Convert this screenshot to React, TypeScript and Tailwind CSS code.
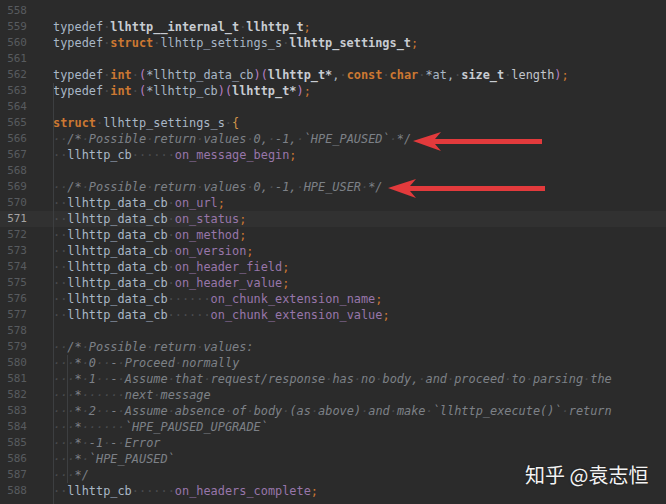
type Tok = [string, string];

const C: Record<string, string> = {
  t: "text-[#a9b7c6]",
  b: "text-[#c8ccd2] font-bold",
  k: "text-[#cc7832] font-bold",
  p: "text-[#b77fc4]",
  f: "text-[#9876aa]",
  s: "text-[#cc7832]",
  c: "text-[#7d8187] italic",
  l: "text-[#c3c6cb]",
  o: "text-[#d1954a]",
};

const lines: Tok[][] = [
  [],
  [["typedef ", "t"], ["llhttp__internal_t llhttp_t", "b"], [";", "s"]],
  [["typedef ", "t"], ["struct", "k"], [" llhttp_settings_s ", "t"], ["llhttp_settings_t", "b"], [";", "s"]],
  [],
  [
    ["typedef ", "t"],
    ["int", "k"],
    [" ", "t"],
    ["(", "p"],
    ["*llhttp_data_cb", "t"],
    [")(", "p"],
    ["llhttp_t*", "b"],
    [", ", "t"],
    ["const char", "k"],
    [" *at, ", "t"],
    ["size_t", "b"],
    [" ", "t"],
    ["length", "l"],
    [")", "p"],
    [";", "s"],
  ],
  [
    ["typedef ", "t"],
    ["int", "k"],
    [" ", "t"],
    ["(", "p"],
    ["*llhttp_cb", "t"],
    [")(", "p"],
    ["llhttp_t*", "b"],
    [")", "p"],
    [";", "s"],
  ],
  [],
  [["struct", "k"], [" llhttp_settings_s ", "t"], ["{", "o"]],
  [["  /* Possible return values 0, -1, `HPE_PAUSED` */", "c"]],
  [["  llhttp_cb      ", "t"], ["on_message_begin", "f"], [";", "s"]],
  [],
  [["  /* Possible return values 0, -1, HPE_USER */", "c"]],
  [["  llhttp_data_cb ", "t"], ["on_url", "f"], [";", "s"]],
  [["  llhttp_data_cb ", "t"], ["on_status", "f"], [";", "s"]],
  [["  llhttp_data_cb ", "t"], ["on_method", "f"], [";", "s"]],
  [["  llhttp_data_cb ", "t"], ["on_version", "f"], [";", "s"]],
  [["  llhttp_data_cb ", "t"], ["on_header_field", "f"], [";", "s"]],
  [["  llhttp_data_cb ", "t"], ["on_header_value", "f"], [";", "s"]],
  [["  llhttp_data_cb      ", "t"], ["on_chunk_extension_name", "f"], [";", "s"]],
  [["  llhttp_data_cb      ", "t"], ["on_chunk_extension_value", "f"], [";", "s"]],
  [],
  [["  /* Possible return values:", "c"]],
  [["   * 0  - Proceed normally", "c"]],
  [["   * 1  - Assume that request/response has no body, and proceed to parsing the", "c"]],
  [["   *      next message", "c"]],
  [["   * 2  - Assume absence of body (as above) and make `llhttp_execute()` return", "c"]],
  [["   *      `HPE_PAUSED_UPGRADE`", "c"]],
  [["   * -1 - Error", "c"]],
  [["   * `HPE_PAUSED`", "c"]],
  [["   */", "c"]],
  [["  llhttp_cb      ", "t"], ["on_headers_complete", "f"], [";", "s"]],
];

function renderTok(tok: Tok, key: number) {
  const [text, kind] = tok;
  const parts = text.split(" ");
  return (
    <span key={key} className={C[kind]}>
      {parts.map((part, i) => (
        <span key={i}>
          {i > 0 && <span className="text-[#4a4c4f] font-normal">·</span>}
          {part}
        </span>
      ))}
    </span>
  );
}

export default function App() {
  return (
    <div className="relative w-[666px] h-[504px] overflow-hidden bg-[#2b2b2b] font-['DejaVu_Sans_Mono',monospace]">
      <div className="flex flex-col pt-[3px]">
        {lines.map((toks, i) => {
          const num = 558 + i;
          const current = num === 571;
          return (
            <div key={num} className={"flex h-4 items-center " + (current ? "bg-[#313131]" : "")}>
              <div
                className={
                  "w-[27px] shrink-0 text-right text-[11px] " +
                  (current ? "text-[#a4a3a3]" : "text-[#585b5f]")
                }
              >
                {num}
              </div>
              <div className="w-[26px] shrink-0" />
              <div className="whitespace-pre text-[11.9px] leading-4">
                {toks.map((t, j) => renderTok(t, j))}
              </div>
            </div>
          );
        })}
      </div>

      {/* indent guides */}
      <div className="absolute left-[53px] top-[83px] bottom-0 w-px bg-[#3d3f41]" />
      <div className="absolute left-[67px] top-[355px] h-[128px] w-px bg-[#3d3f41]" />

      {/* red arrows */}
      <svg className="absolute inset-0 pointer-events-none" width="666" height="504">
        <polygon
          points="413,141 441,132 435,139 542,139 542,144 435,144 441,151"
          fill="#e23a3c"
        />
        <polygon
          points="388,188 416,179 410,186 545,186 545,191 410,191 416,198"
          fill="#e23a3c"
        />
      </svg>

      <div className="absolute left-[525px] top-[462px] text-[20px] leading-[26px] text-[#f4f4f4] font-['Noto_Sans_CJK_SC',sans-serif] [text-shadow:0_0_2px_rgba(0,0,0,0.5)]">
        知乎 @袁志恒
      </div>
    </div>
  );
}
